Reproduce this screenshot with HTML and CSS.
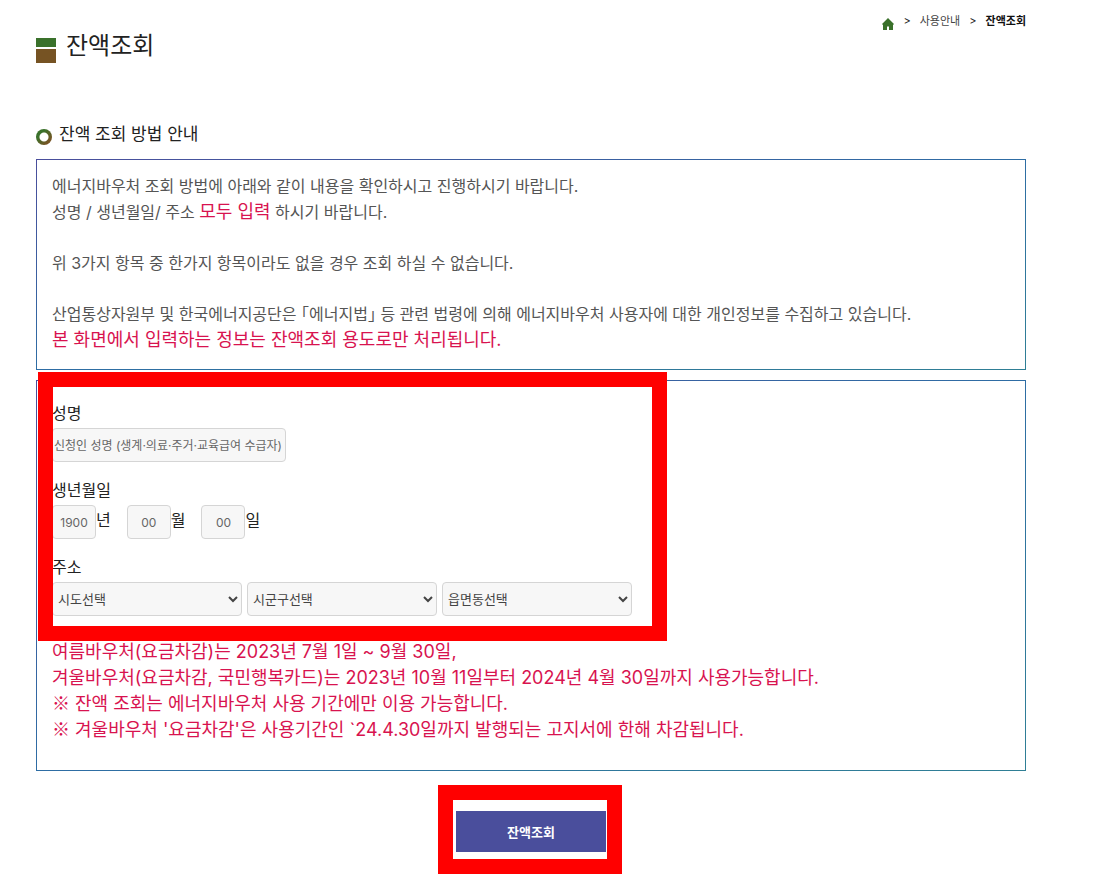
FILE: index.html
```
<!DOCTYPE html>
<html lang="ko">
<head>
    <meta charset="UTF-8">
    <meta name="viewport" content="width=device-width, initial-scale=1.0">
    <title>잔액조회</title>
    <link rel="stylesheet" href="styles.css">
</head>
<body>
    <div class="container">
        <header class="page-header">
            <h1><span class="title-mark"></span>잔액조회</h1>
            <nav class="breadcrumb">
                <a href="#" aria-label="홈">
                    <svg class="home-icon" viewBox="0 0 12 12"><path d="M6 0 L12 6 L11 7 V12 H7 V8.5 H5 V12 H1 V7 L0 6 Z"/></svg>
                </a>
                <span>&gt;</span>
                <a href="#">사용안내</a>
                <span>&gt;</span>
                <strong>잔액조회</strong>
            </nav>
        </header>

        <h2><span class="ring"></span>잔액 조회 방법 안내</h2>

        <!-- Guide text -->
        <div class="box guide">
            <p>에너지바우처 조회 방법에 아래와 같이 내용을 확인하시고 진행하시기 바랍니다.<br>
            성명 / 생년월일/ 주소 <span class="point">모두 입력</span> 하시기 바랍니다.</p>
            <p>위 3가지 항목 중 한가지 항목이라도 없을 경우 조회 하실 수 없습니다.</p>
            <p>산업통상자원부 및 한국에너지공단은 「에너지법」 등 관련 법령에 의해 에너지바우처 사용자에 대한 개인정보를 수집하고 있습니다.<br>
            <span class="point">본 화면에서 입력하는 정보는 잔액조회 용도로만 처리됩니다.</span></p>
        </div>

        <!-- Search form -->
        <form id="balanceForm">
            <div class="box search">
                <div class="fields">
                    <div class="field">
                        <label for="userName">성명</label>
                        <input type="text" id="userName" class="name-input" placeholder="신청인 성명 (생계·의료·주거·교육급여 수급자)">
                    </div>
                    <div class="field">
                        <label for="birthYear">생년월일</label>
                        <div class="birth">
                            <span><input type="text" id="birthYear" placeholder="1900"><label for="birthYear">년</label></span>
                            <span><input type="text" id="birthMonth" placeholder="00"><label for="birthMonth">월</label></span>
                            <span><input type="text" id="birthDay" placeholder="00"><label for="birthDay">일</label></span>
                        </div>
                    </div>
                    <div class="field">
                        <label for="sido">주소</label>
                        <div class="address">
                            <select id="sido"><option>시도선택</option></select>
                            <select aria-label="시군구"><option>시군구선택</option></select>
                            <select aria-label="읍면동"><option>읍면동선택</option></select>
                        </div>
                    </div>
                    <div class="mark mark-fields"></div>
                </div>
                <p class="notice point">여름바우처(요금차감)는 2023년 7월 1일 ~ 9월 30일,<br>
                겨울바우처(요금차감, 국민행복카드)는 2023년 10월 11일부터 2024년 4월 30일까지 사용가능합니다.<br>
                <span class="ref-mark">※</span> 잔액 조회는 에너지바우처 사용 기간에만 이용 가능합니다.<br>
                <span class="ref-mark">※</span> 겨울바우처 '요금차감'은 사용기간인 `24.4.30일까지 발행되는 고지서에 한해 차감됩니다.</p>
            </div>
            <div class="submit">
                <button type="button">잔액조회</button>
                <div class="mark mark-button"></div>
            </div>
        </form>
    </div>
</body>
</html>
```
FILE: styles.css
```
* {
    box-sizing: border-box;
}

body {
    margin: 0;
    background-color: #fff;
    color: #222;
    font-family: Inter, "Noto Sans CJK KR", sans-serif;
    font-size: 16px;
    line-height: 26px;
}

.container {
    margin: 0 82px 0 36px;
    padding-bottom: 32px;
}

h1, h2, p {
    margin: 0;
    font-weight: normal;
}

.page-header {
    display: flex;
    justify-content: space-between;
    align-items: flex-start;
}

h1 {
    display: flex;
    align-items: flex-end;
    gap: 10px;
    padding-top: 29px;
    font-size: 24px;
    line-height: 34px;
}

.title-mark {
    width: 20px;
    height: 25px;
    border-top: 9px solid #3a712b;
    border-bottom: 14px solid #765323;
}

.breadcrumb {
    display: flex;
    align-items: center;
    gap: 9px;
    padding-top: 8px;
    font-size: 11px;
}

.breadcrumb a {
    color: #444;
    text-decoration: none;
}

.breadcrumb strong {
    color: #111;
}

.home-icon {
    display: block;
    width: 12px;
    height: 12px;
    margin-top: 6px;
    fill: #3a712b;
}

h2 {
    display: flex;
    align-items: center;
    gap: 7px;
    margin: 58px 0 12px;
    font-size: 17px;
}

.ring {
    width: 16px;
    height: 16px;
    margin-top: 6px;
    border-radius: 50%;
    background: radial-gradient(circle, #fff 4px, transparent 5px), linear-gradient(135deg, #3a712b 30%, #765323 80%);
}

.box {
    border: 1px solid;
    border-image: linear-gradient(to bottom right, #4a4e9c, #2e6da4, #2f7f95) 1;
}

.guide {
    padding: 13px 15px 16px;
    color: #555;
    font-feature-settings: "halt";
}

.guide p + p {
    margin-top: 25px;
}

.point {
    color: #d8134f;
    font-size: 18px;
}

.ref-mark {
    font-family: "Noto Sans CJK KR", sans-serif;
    line-height: 18px;
}

.search {
    margin-top: 10px;
    padding: 19px 15px 27px;
}

.fields {
    position: relative;
}

.field {
    margin-bottom: 15px;
}

.field > label {
    display: block;
    margin-bottom: 2px;
}

input, select {
    height: 34px;
    border: 1px solid #d5d5d5;
    border-radius: 4px;
    background-color: #f7f7f7;
    color: #444;
    font-family: inherit;
    font-size: 13px;
}

input::placeholder {
    color: #666;
}

.name-input {
    display: block;
    width: 234px;
    padding: 0 1px;
    font-size: 12px;
}

.birth {
    display: flex;
    gap: 16px;
}

.birth span {
    display: flex;
    align-items: center;
}

.birth input {
    width: 44px;
    padding: 0;
    font-size: 12px;
    text-align: center;
}

.birth label {
    margin-bottom: 4px;
}

.address {
    display: flex;
    gap: 5px;
}

.address select {
    width: 190px;
    padding: 0 1px;
}

.notice {
    margin-top: 23px;
}

.submit {
    position: relative;
    width: 150px;
    margin: 40px auto 0;
}

button {
    display: block;
    width: 100%;
    height: 41px;
    border: none;
    background-color: #4a4e9c;
    color: white;
    font-family: inherit;
    font-size: 13px;
    font-weight: bold;
    cursor: pointer;
}

/* Red frames laid over the parts to fill in and press */
.mark {
    position: absolute;
    border: 15px solid #f00;
    pointer-events: none;
}

.mark-fields {
    top: -28px;
    bottom: -25px;
    left: -14px;
    width: 629px;
}

.mark-button {
    top: -26px;
    bottom: -22px;
    left: -18px;
    right: -16px;
}
```
